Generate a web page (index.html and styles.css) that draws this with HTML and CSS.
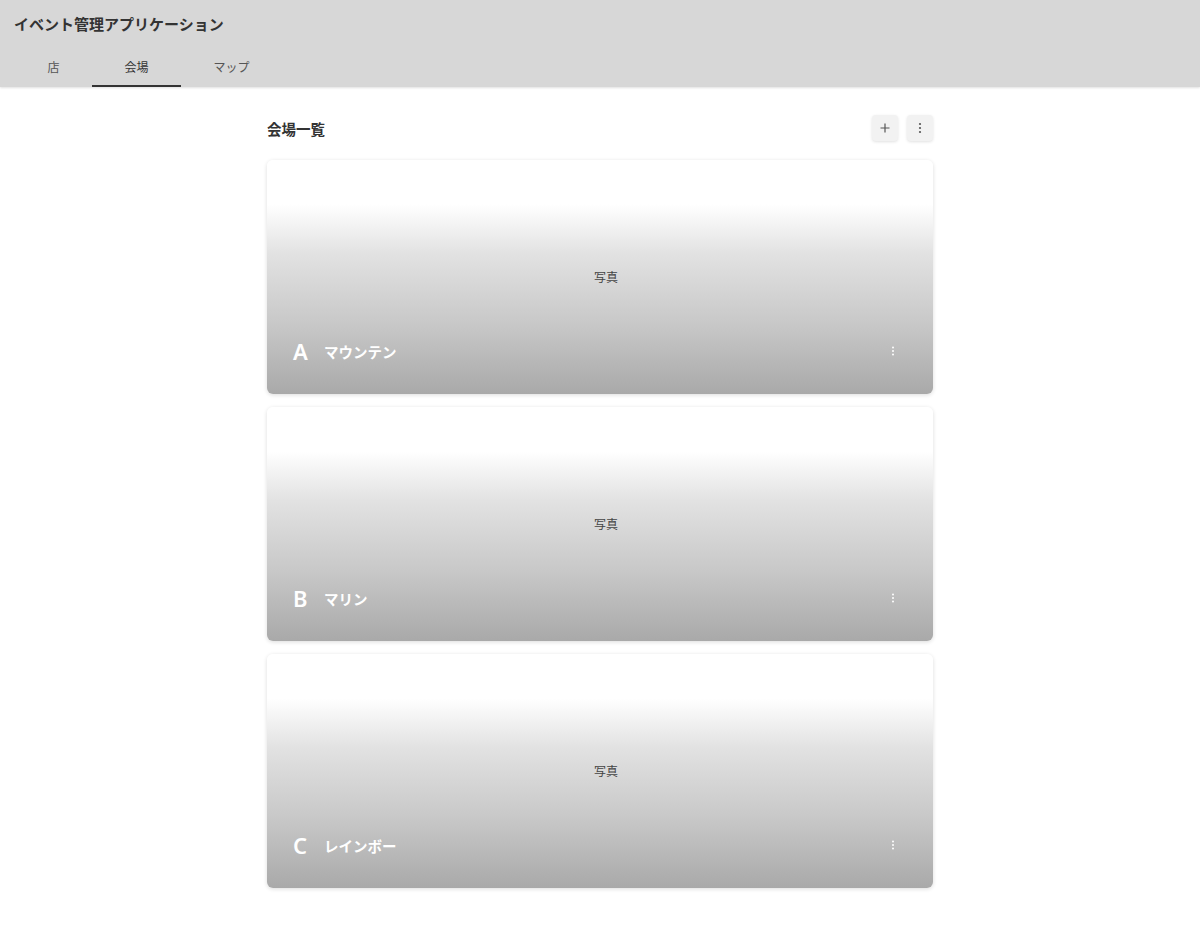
FILE: index.html
```html
<!DOCTYPE html>
<html lang="ja">
<head>
    <meta charset="UTF-8">
    <title>イベント管理アプリケーション</title>
    <link rel="stylesheet" href="styles.css">
</head>
<body>

    <header class="app-bar">
        <h1>イベント管理アプリケーション</h1>
        <nav class="tabs">
            <div class="tab">店</div>
            <div class="tab active">会場</div>
            <div class="tab">マップ</div>
        </nav>
    </header>

    <main class="content">
        <div class="list-head">
            <h2>会場一覧</h2>
            <div class="actions">
                <button class="icon-btn">
                    <svg width="10" height="10" viewBox="0 0 10 10"><path d="M5 0.5v9M0.5 5h9" stroke="#555" stroke-width="1.2"/></svg>
                </button>
                <button class="icon-btn">
                    <svg width="4" height="12" viewBox="0 0 4 12"><circle cx="2" cy="2" r="1.1" fill="#555"/><circle cx="2" cy="6" r="1.1" fill="#555"/><circle cx="2" cy="10" r="1.1" fill="#555"/></svg>
                </button>
            </div>
        </div>

        <div class="card">
            <div class="photo">写真</div>
            <div class="card-foot">
                <span class="letter">A</span>
                <span class="name">マウンテン</span>
                <svg class="kebab" width="4" height="10" viewBox="0 0 4 10"><circle cx="2" cy="1.5" r="1" fill="#fff"/><circle cx="2" cy="5" r="1" fill="#fff"/><circle cx="2" cy="8.5" r="1" fill="#fff"/></svg>
            </div>
        </div>

        <div class="card">
            <div class="photo">写真</div>
            <div class="card-foot">
                <span class="letter">B</span>
                <span class="name">マリン</span>
                <svg class="kebab" width="4" height="10" viewBox="0 0 4 10"><circle cx="2" cy="1.5" r="1" fill="#fff"/><circle cx="2" cy="5" r="1" fill="#fff"/><circle cx="2" cy="8.5" r="1" fill="#fff"/></svg>
            </div>
        </div>

        <div class="card">
            <div class="photo">写真</div>
            <div class="card-foot">
                <span class="letter">C</span>
                <span class="name">レインボー</span>
                <svg class="kebab" width="4" height="10" viewBox="0 0 4 10"><circle cx="2" cy="1.5" r="1" fill="#fff"/><circle cx="2" cy="5" r="1" fill="#fff"/><circle cx="2" cy="8.5" r="1" fill="#fff"/></svg>
            </div>
        </div>
    </main>

</body>
</html>
```

FILE: styles.css
```css
body {
    font-family: "Noto Sans CJK JP", "Noto Sans", sans-serif;
    margin: 0;
    padding: 0;
    background-color: #fff;
    color: #333;
}

.app-bar {
    background-color: #d7d7d7;
    height: 87px;
    box-shadow: 0 1px 2px rgba(0, 0, 0, 0.12);
}

.app-bar h1 {
    margin: 0;
    padding: 13px 0 0 14px;
    font-size: 15px;
    font-weight: 700;
    color: #333;
    line-height: 22px;
}

.tabs {
    display: flex;
    padding-left: 15px;
    margin-top: 20px;
}

.tab {
    padding: 0 32.5px;
    height: 32px;
    font-size: 12px;
    line-height: 24px;
    color: #555;
    box-sizing: border-box;
}

.tab.active {
    color: #333;
    border-bottom: 2px solid #333;
}

.content {
    width: 666px;
    margin: 0 auto;
    padding-top: 28px;
}

.list-head {
    display: flex;
    justify-content: space-between;
    align-items: center;
    margin-bottom: 19px;
}

.list-head h2 {
    margin: 0;
    font-size: 14.5px;
    font-weight: 700;
    color: #333;
}

.actions {
    display: flex;
    gap: 9px;
}

.icon-btn {
    width: 26px;
    height: 26px;
    border: none;
    border-radius: 4px;
    background-color: #f2f2f2;
    box-shadow: 0 1px 3px rgba(0, 0, 0, 0.12);
    display: flex;
    align-items: center;
    justify-content: center;
    padding: 0;
}

.card {
    height: 234px;
    border-radius: 6px;
    margin-bottom: 13px;
    background: linear-gradient(to bottom, #fff 0%, #fff 19%, #e2e2e2 40%, #c8c8c8 70%, #a9a9a9 100%);
    box-shadow: 0 1px 4px rgba(0, 0, 0, 0.14);
    display: flex;
    flex-direction: column;
}

.photo {
    margin-top: 108px;
    padding-left: 12px;
    text-align: center;
    font-size: 12px;
    line-height: 18px;
    color: #444;
}

.card-foot {
    display: flex;
    align-items: center;
    margin-top: auto;
    margin-bottom: 27px;
    padding: 0 38px 0 26px;
    height: 32px;
}

.letter {
    font-family: "Noto Sans", sans-serif;
    font-size: 22px;
    font-weight: 600;
    color: #fff;
    width: 31px;
}

.name {
    font-size: 14.5px;
    font-weight: 700;
    color: #fff;
    flex: 1;
}
```
